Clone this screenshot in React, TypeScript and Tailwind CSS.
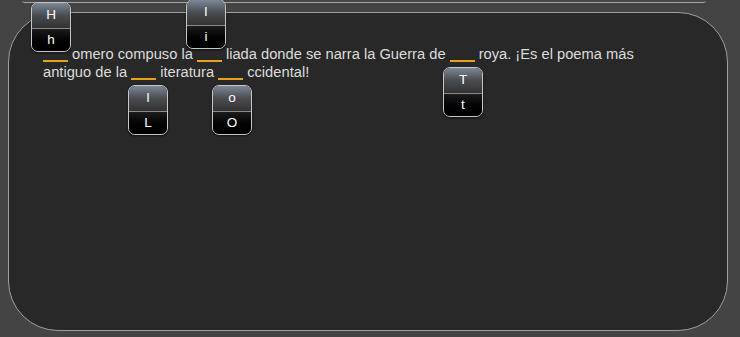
import React from "react";

const Blank = () => (
  <span className="inline-block w-[25px] h-[14px] border-b-2 border-[#e8a21c] align-[-3px] mr-[4px]" />
);

const Tile = ({ up, low, x, y }: { up: string; low: string; x: number; y: number }) => (
  <div
    className="absolute w-[40px] h-[50px] rounded-[7px] border border-[#c8c8c8] overflow-hidden flex flex-col shadow-[0_1px_2px_rgba(0,0,0,0.6)]"
    style={{ left: x, top: y }}
  >
    <div className="h-[26px] flex items-center justify-center bg-gradient-to-b from-[#7c8898] via-[#4a4c50] to-[#323232] text-white text-[13.5px] border-b border-[#8a8a8a]">
      {up}
    </div>
    <div className="flex-1 flex items-center justify-center bg-gradient-to-b from-[#1c1c1c] to-[#000000] text-white text-[13.5px]">
      {low}
    </div>
  </div>
);

export default function App() {
  return (
    <div
      className="relative w-[740px] h-[337px] bg-[#444444] overflow-hidden"
      style={{ fontFamily: '"Liberation Sans", Arial, sans-serif' }}
    >
      <div className="ml-[22px] w-[684px] h-[3px] border-b border-[#a8a8a8] rounded-b-[6px] bg-[#484848]" />
      <div className="ml-[8px] mt-[9px] w-[720px] h-[319px] rounded-[50px] border border-[#a0a0a0] bg-[#282828] pl-[34px] pr-[60px] pt-[32px]">
        <p className="text-[14.7px] leading-[18px] text-[#dcdcdc]">
          <Blank />omero compuso la <Blank />liada donde se narra la Guerra de <Blank />roya. ¡Es el poema más antiguo de la <Blank />iteratura <Blank />ccidental!
        </p>
      </div>
      <Tile up="H" low="h" x={31} y={2} />
      <Tile up="I" low="i" x={186} y={-1} />
      <Tile up="l" low="L" x={128} y={85} />
      <Tile up="o" low="O" x={212} y={85} />
      <Tile up="T" low="t" x={443} y={67} />
    </div>
  );
}
